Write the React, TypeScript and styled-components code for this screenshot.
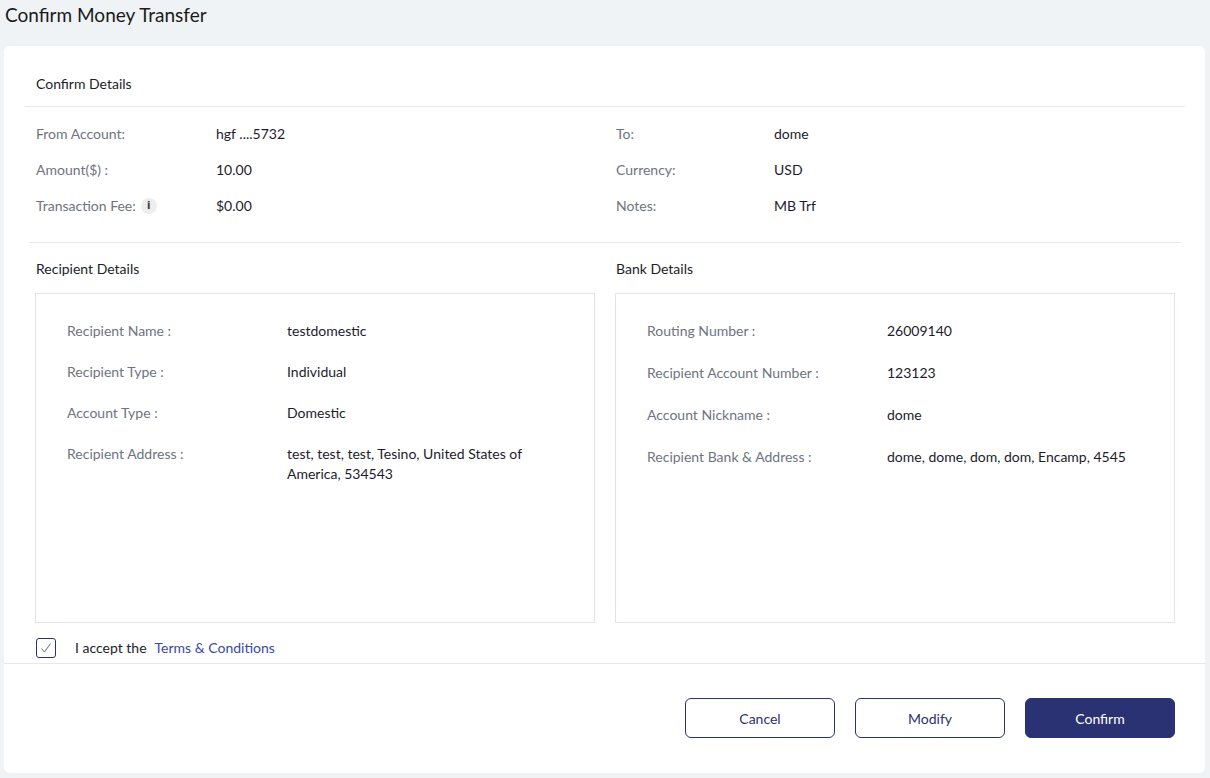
import * as React from 'react';
import styled, { createGlobalStyle } from 'styled-components';

const GlobalStyle = createGlobalStyle`
  html, body {
    margin: 0;
    padding: 0;
    background: #f0f3f6;
    font-family: Lato, "Noto Sans", sans-serif;
    color: #1c1c2c;
  }
  * { box-sizing: border-box; }
`;

const Page = styled.div`
  width: 1210px;
  height: 778px;
  display: flex;
  flex-direction: column;
`;

const Title = styled.h1`
  margin: 0;
  height: 46px;
  padding: 4px 0 0 5px;
  font-size: 19px;
  line-height: 22px;
  font-weight: 400;
  color: #1a1a1a;
`;

const Card = styled.div`
  margin-left: 4px;
  width: 1201px;
  height: 727px;
  background: #fff;
  border-radius: 6px;
  display: flex;
  flex-direction: column;
`;

const CardHeader = styled.div`
  margin: 0 20px 0 21px;
  padding: 28px 0 12px 11px;
  font-size: 14px;
  line-height: 20px;
  border-bottom: 1px solid #e3e8ef;
`;

const Summary = styled.div`
  margin: 0 24px 0 25px;
  padding: 17px 0 26px 7px;
  display: grid;
  grid-template-columns: 580px 1fr;
  border-bottom: 1px solid #e3e8ef;
`;

const Column = styled.div<{ $gap: number }>`
  display: flex;
  flex-direction: column;
  gap: ${p => p.$gap}px;
`;

const Row = styled.div<{ $labelWidth: number }>`
  display: grid;
  grid-template-columns: ${p => p.$labelWidth}px 1fr;
  align-items: start;
  font-size: 14px;
  line-height: 20px;
`;

const Label = styled.span`
  color: #6e7480;
  display: flex;
  align-items: center;
  gap: 5px;
`;

const Value = styled.span`
  color: #1c1c2c;
`;

const InfoIcon = styled.span`
  width: 16px;
  height: 16px;
  border-radius: 50%;
  background: #ededed;
  display: inline-flex;
  align-items: center;
  justify-content: center;
  font-size: 10px;
  font-weight: 700;
  color: #3a3a3a;
  font-family: "DejaVu Sans", sans-serif;
`;

const Panels = styled.div`
  padding: 16px 30px 0 31px;
  display: grid;
  grid-template-columns: 560px 560px;
  gap: 20px;
`;

const PanelTitle = styled.div`
  padding-left: 1px;
  font-size: 14px;
  line-height: 20px;
  margin-bottom: 14px;
`;

const Panel = styled.div`
  height: 330px;
  border: 1px solid #dfe4ec;
  padding: 27px 20px 0 31px;
`;

const Accept = styled.div`
  padding: 15px 0 5px 32px;
  display: flex;
  align-items: center;
  font-size: 14px;
  line-height: 20px;
  border-bottom: 1px solid #e3e8ef;
`;

const Check = styled.span`
  width: 20px;
  height: 20px;
  border: 1px solid #2b3273;
  border-radius: 3px;
  display: inline-flex;
  align-items: center;
  justify-content: center;
  margin-right: 19px;
`;

const Link = styled.a`
  color: #3a47a8;
  text-decoration: none;
  margin-left: 8px;
`;

const Actions = styled.div`
  padding: 34px 30px 0 0;
  display: flex;
  justify-content: flex-end;
  gap: 20px;
`;

const Button = styled.button<{ $primary?: boolean }>`
  width: 150px;
  height: 40px;
  border-radius: 6px;
  border: 1px solid #2b3273;
  background: ${p => (p.$primary ? '#2b3273' : '#fff')};
  color: ${p => (p.$primary ? '#fff' : '#2b3273')};
  font-family: Lato, "Noto Sans", sans-serif;
  font-size: 14px;
  cursor: pointer;
`;

type Item = [string, React.ReactNode];

const fromItems: Item[] = [
  ['From Account:', 'hgf ....5732'],
  ['Amount($) :', '10.00'],
  ['Transaction Fee:', '$0.00'],
];

const toItems: Item[] = [
  ['To:', 'dome'],
  ['Currency:', 'USD'],
  ['Notes:', 'MB Trf'],
];

const recipient: Item[] = [
  ['Recipient Name :', 'testdomestic'],
  ['Recipient Type :', 'Individual'],
  ['Account Type :', 'Domestic'],
  ['Recipient Address :', 'test, test, test, Tesino, United States of America, 534543'],
];

const bank: Item[] = [
  ['Routing Number :', '26009140'],
  ['Recipient Account Number :', '123123'],
  ['Account Nickname :', 'dome'],
  ['Recipient Bank & Address :', 'dome, dome, dom, dom, Encamp, 4545'],
];

const Rows = ({ items, labelWidth, gap }: { items: Item[]; labelWidth: number; gap: number }) => (
  <Column $gap={gap}>
    {items.map(([label, value]) => (
      <Row key={label} $labelWidth={labelWidth}>
        <Label>
          {label}
          {label === 'Transaction Fee:' && <InfoIcon>i</InfoIcon>}
        </Label>
        <Value>{value}</Value>
      </Row>
    ))}
  </Column>
);

export default function App() {
  return (
    <>
      <GlobalStyle />
      <Page>
        <Title>Confirm Money Transfer</Title>
        <Card>
          <CardHeader>Confirm Details</CardHeader>
          <Summary>
            <Rows items={fromItems} labelWidth={180} gap={16} />
            <Rows items={toItems} labelWidth={158} gap={16} />
          </Summary>
          <Panels>
            <div>
              <PanelTitle>Recipient Details</PanelTitle>
              <Panel>
                <Rows items={recipient} labelWidth={220} gap={21} />
              </Panel>
            </div>
            <div>
              <PanelTitle>Bank Details</PanelTitle>
              <Panel>
                <Rows items={bank} labelWidth={240} gap={22} />
              </Panel>
            </div>
          </Panels>
          <Accept>
            <Check>
              <svg width="14" height="14" viewBox="0 0 14 14" fill="none">
                <path d="M2.5 7.5 L5.5 11 L11.5 2.5" stroke="#5a6aa8" strokeWidth="1" />
              </svg>
            </Check>
            I accept the
            <Link href="#">Terms &amp; Conditions</Link>
          </Accept>
          <Actions>
            <Button>Cancel</Button>
            <Button>Modify</Button>
            <Button $primary>Confirm</Button>
          </Actions>
        </Card>
      </Page>
    </>
  );
}
